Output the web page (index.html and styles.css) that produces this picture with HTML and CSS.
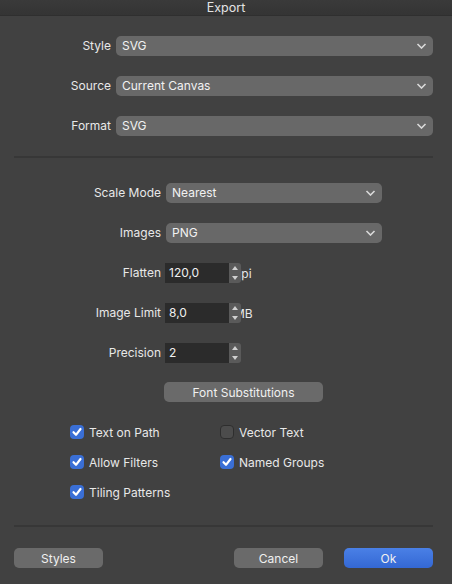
FILE: index.html
```html
<!DOCTYPE html>
<html>
<head>
<meta charset="utf-8">
<link rel="stylesheet" href="styles.css">
</head>
<body>
<div class="window">
  <div class="titlebar">Export</div>

  <div class="form form-top">
    <label class="lbl">Style</label>
    <div class="select">SVG<svg class="chev" viewBox="0 0 10 6"><path d="M1 1 L5 5 L9 1"/></svg></div>
    <label class="lbl">Source</label>
    <div class="select">Current Canvas<svg class="chev" viewBox="0 0 10 6"><path d="M1 1 L5 5 L9 1"/></svg></div>
    <label class="lbl">Format</label>
    <div class="select">SVG<svg class="chev" viewBox="0 0 10 6"><path d="M1 1 L5 5 L9 1"/></svg></div>
  </div>

  <div class="sep sep-top"></div>

  <div class="form form-mid">
    <label class="lbl">Scale Mode</label>
    <div class="select select-mid">Nearest<svg class="chev" viewBox="0 0 10 6"><path d="M1 1 L5 5 L9 1"/></svg></div>
    <label class="lbl">Images</label>
    <div class="select select-mid">PNG<svg class="chev" viewBox="0 0 10 6"><path d="M1 1 L5 5 L9 1"/></svg></div>
    <label class="lbl">Flatten</label>
    <div class="numrow"><div class="num">120,0</div><span class="unit">dpi</span><div class="spin"><svg viewBox="0 0 12 20"><path d="M3 7 L6 3 L9 7 Z M3 13 L6 17 L9 13 Z"/></svg></div></div>
    <label class="lbl">Image Limit</label>
    <div class="numrow"><div class="num">8,0</div><span class="unit">MB</span><div class="spin"><svg viewBox="0 0 12 20"><path d="M3 7 L6 3 L9 7 Z M3 13 L6 17 L9 13 Z"/></svg></div></div>
    <label class="lbl">Precision</label>
    <div class="numrow"><div class="num">2</div><div class="spin"><svg viewBox="0 0 12 20"><path d="M3 7 L6 3 L9 7 Z M3 13 L6 17 L9 13 Z"/></svg></div></div>
  </div>

  <div class="fontsub"><button class="btn btn-fs">Font Substitutions</button></div>

  <div class="checks">
    <div class="check"><span class="box on"><svg viewBox="0 0 14 14"><path d="M3.5 7.2 L6 9.8 L10.5 4"/></svg></span>Text on Path</div>
    <div class="check"><span class="box"></span>Vector Text</div>
    <div class="check"><span class="box on"><svg viewBox="0 0 14 14"><path d="M3.5 7.2 L6 9.8 L10.5 4"/></svg></span>Allow Filters</div>
    <div class="check"><span class="box on"><svg viewBox="0 0 14 14"><path d="M3.5 7.2 L6 9.8 L10.5 4"/></svg></span>Named Groups</div>
    <div class="check"><span class="box on"><svg viewBox="0 0 14 14"><path d="M3.5 7.2 L6 9.8 L10.5 4"/></svg></span>Tiling Patterns</div>
  </div>

  <div class="sep sep-bottom"></div>

  <div class="footer">
    <button class="btn btn-foot">Styles</button>
    <div class="spacer"></div>
    <button class="btn btn-foot">Cancel</button>
    <button class="btn btn-foot btn-ok">Ok</button>
  </div>
</div>
</body>
</html>
```

FILE: styles.css
```css
html, body {
  margin: 0;
  padding: 0;
  background: #414141;
}
body {
  font-family: Inter, "Liberation Sans", Arial, sans-serif;
  font-size: 12px;
  color: #e8e8e8;
}
.window {
  width: 452px;
  height: 584px;
  background: #414141;
  overflow: hidden;
}
.titlebar {
  height: 16px;
  line-height: 15px;
  text-align: center;
  font-size: 12.5px;
  color: #e4e4e4;
  background: linear-gradient(#3a3a3a, #343434);
  border-bottom: 1px solid #2f2f2f;
  box-sizing: border-box;
}
.form {
  display: grid;
  row-gap: 20px;
  align-items: center;
}
.form-top {
  grid-template-columns: 111px 317px;
  column-gap: 5px;
  padding-top: 20px;
}
.form-mid {
  grid-template-columns: 161px 217px;
  column-gap: 4px;
  padding-top: 25px;
}
.lbl {
  text-align: right;
  color: #e8e8e8;
  line-height: 20px;
}
.select {
  position: relative;
  height: 20px;
  line-height: 20px;
  background: #686868;
  border-radius: 5px;
  padding-left: 6px;
  color: #f2f2f2;
  box-sizing: border-box;
}
.select-mid {
  margin-left: 1px;
}
.chev {
  position: absolute;
  right: 6px;
  top: 7px;
  width: 11px;
  height: 6px;
  fill: none;
  stroke: #dadada;
  stroke-width: 1.6;
}
.sep {
  height: 2px;
  background: #373737;
  margin: 0 19px 0 14px;
}
.sep-top {
  margin-top: 20px;
}
.numrow {
  display: flex;
  align-items: center;
  height: 20px;
  position: relative;
}
.num {
  width: 64px;
  height: 20px;
  line-height: 20px;
  background: #2b2b2b;
  padding-left: 4px;
  box-sizing: border-box;
  color: #f0f0f0;
}
.unit {
  margin-left: 5px;
  color: #e8e8e8;
}
.spin {
  position: absolute;
  left: 64px;
  top: 0;
  width: 12px;
  height: 20px;
  background: #5a5a5a;
  border-radius: 0 3px 3px 0;
}
.spin svg {
  width: 12px;
  height: 20px;
  display: block;
  fill: #d0d0d0;
}
.fontsub {
  padding-top: 19px;
  padding-left: 164px;
}
.btn {
  font-family: inherit;
  font-size: 12px;
  color: #f0f0f0;
  background: #6a6a6a;
  border: none;
  border-radius: 5px;
  height: 20px;
  padding: 0;
  margin: 0;
  display: block;
}
.btn-fs {
  width: 159px;
}
.checks {
  display: grid;
  grid-template-columns: 150px 150px;
  row-gap: 10px;
  padding-left: 70px;
  padding-top: 20px;
}
.check {
  display: flex;
  align-items: center;
  height: 20px;
  color: #e8e8e8;
}
.box {
  width: 14px;
  height: 14px;
  border-radius: 4px;
  margin-right: 5px;
  box-sizing: border-box;
  background: #4c4c4c;
  border: 1px solid #2e2e2e;
  flex: none;
}
.box.on {
  background: #3a6fd6;
  border: none;
}
.box svg {
  display: block;
  width: 14px;
  height: 14px;
  fill: none;
  stroke: #fff;
  stroke-width: 2.2;
  stroke-linecap: round;
  stroke-linejoin: round;
}
.sep-bottom {
  margin-top: 23px;
}
.footer {
  display: flex;
  padding: 21px 19px 0 14px;
  gap: 21px;
}
.spacer {
  flex: 1;
}
.btn-foot {
  width: 89px;
}
.btn-ok {
  background: linear-gradient(#4a80e6, #3468d4);
}
```
